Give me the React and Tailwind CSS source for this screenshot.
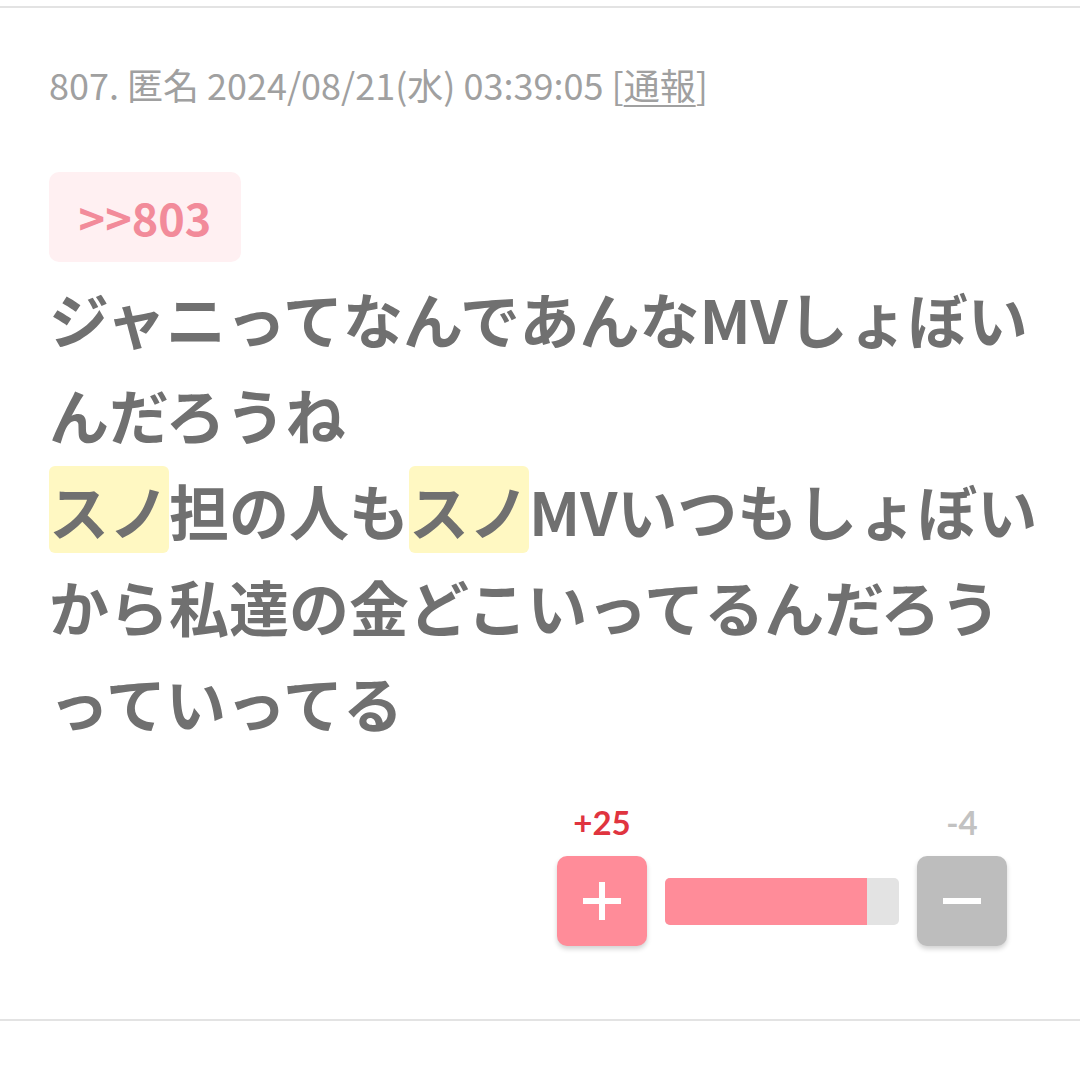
export default function App() {
  const jp = { fontFamily: '"Noto Sans CJK JP", sans-serif' };
  return (
    <div className="w-[1080px] h-[1073px] bg-white overflow-hidden" style={jp}>
      <div className="h-[6px]" />
      <div className="border-t-2 border-[#e3e3e3]">
        <div className="pl-[49px] pr-[30px]">
          <div className="mt-[56px] h-[40px] text-[36px] leading-[40px] text-[#a0a0a0] whitespace-nowrap">
            807. 匿名 2024/08/21(水) 03:39:05 [<span className="underline underline-offset-[5px] decoration-2">通報</span>]
          </div>
          <div className="mt-[68px] w-[192px] h-[90px] rounded-[10px] bg-[#fff0f2] flex items-center justify-center text-[45px] font-bold text-[#f28b9a]">
            &gt;&gt;803
          </div>
          <div className="mt-[8px] text-[60px] leading-[96px] font-bold text-[#707070] whitespace-nowrap">
            <div>ジャニってなんであんなMVしょぼい</div>
            <div>んだろうね</div>
            <div>
              <span className="bg-[#fff8c2] rounded-[6px]">スノ</span>担の人も
              <span className="bg-[#fff8c2] rounded-[6px]">スノ</span>MVいつもしょぼい
            </div>
            <div>から私達の金どこいってるんだろう</div>
            <div>っていってる</div>
          </div>
          <div className="mt-[52px] flex justify-end pr-[43px]">
            <div className="flex items-end gap-[18px]">
              <div className="flex flex-col items-center">
                <div className="text-[33px] font-bold text-[#e0343f] leading-[40px] mb-[14px]" style={{ fontFamily: 'Lato, sans-serif' }}>+25</div>
                <div className="w-[90px] h-[90px] rounded-[10px] bg-[#ff8c99] shadow-[0_3px_5px_rgba(0,0,0,0.18)] flex items-center justify-center">
                  <svg width="38" height="38" viewBox="0 0 38 38">
                    <rect x="16" y="0" width="6" height="38" fill="white" />
                    <rect x="0" y="16" width="38" height="6" fill="white" />
                  </svg>
                </div>
              </div>
              <div className="h-[90px] flex items-center">
                <div className="w-[234px] h-[47px] rounded-[5px] bg-[#e3e3e3] overflow-hidden">
                  <div className="h-full bg-[#ff8c99]" style={{ width: `${(25 / 29) * 100}%` }} />
                </div>
              </div>
              <div className="flex flex-col items-center">
                <div className="text-[33px] font-bold text-[#c2c2c2] leading-[40px] mb-[14px]" style={{ fontFamily: 'Lato, sans-serif' }}>-4</div>
                <div className="w-[90px] h-[90px] rounded-[10px] bg-[#bdbdbd] shadow-[0_3px_5px_rgba(0,0,0,0.18)] flex items-center justify-center">
                  <svg width="38" height="6" viewBox="0 0 38 6">
                    <rect x="0" y="0" width="38" height="6" fill="white" />
                  </svg>
                </div>
              </div>
            </div>
          </div>
        </div>
      </div>
      <div className="mt-[73px] border-t-2 border-[#e3e3e3]" />
    </div>
  );
}
